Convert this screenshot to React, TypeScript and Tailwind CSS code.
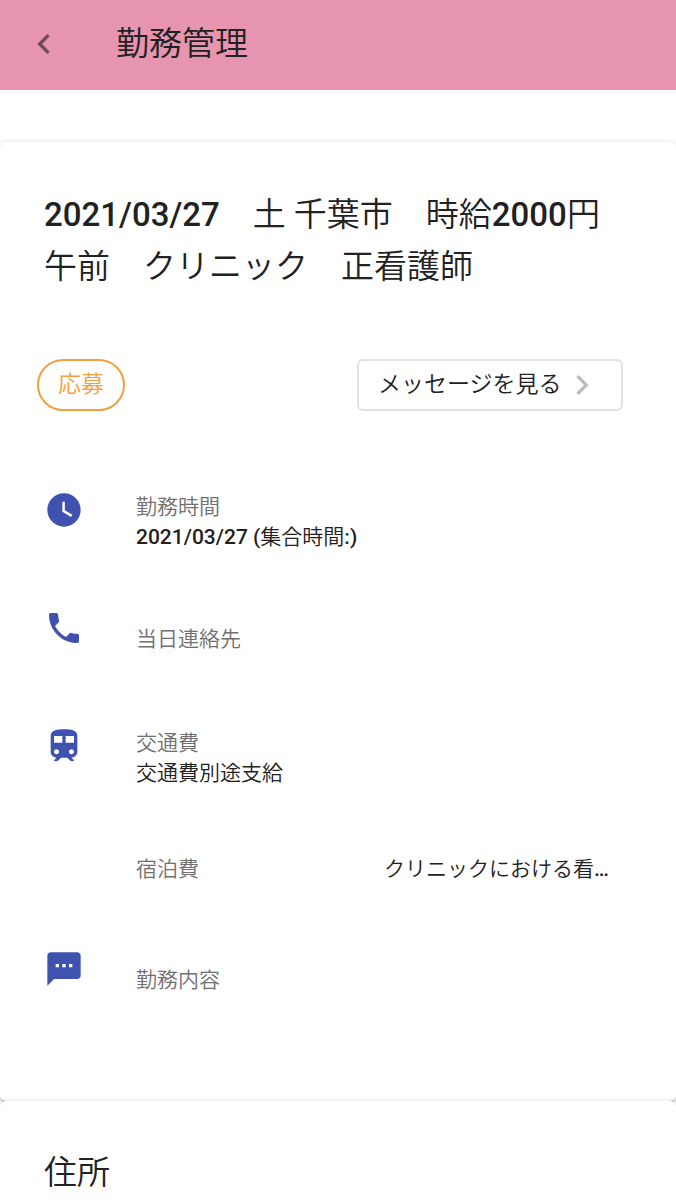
import type { ReactNode } from 'react'
import {
  MdNavigateBefore,
  MdNavigateNext,
  MdWatchLater,
  MdPhone,
  MdTrain,
  MdSms,
} from 'react-icons/md'

interface DetailRowProps {
  icon?: ReactNode
  label: string
  children?: ReactNode
  className?: string
}

// Rows without a value sit a little lower than their icon
function DetailRow({ icon, label, children, className = '' }: DetailRowProps) {
  return (
    <div className={`flex items-start ${className}`}>
      <div className="w-[92px] shrink-0 text-[#4052b0]">{icon}</div>
      <dl className={`text-[21px] leading-[30px] ${children ? 'pt-0.5' : 'pt-4'}`}>
        <dt className="text-[#707070]">{label}</dt>
        {children && <dd>{children}</dd>}
      </dl>
    </div>
  )
}

const cardClass =
  'rounded-md bg-white px-11 shadow-[0_3px_2px_-2px_rgba(0,0,0,0.2),0_2px_2px_rgba(0,0,0,0.14),0_1px_6px_rgba(0,0,0,0.16)]'

export default function App() {
  return (
    <div className="min-h-screen bg-white font-['Roboto','Noto_Sans_CJK_JP',sans-serif] font-[350] text-[#212121]" lang="ja">
      {/* Header */}
      <header className="flex h-[90px] items-center bg-[#e794b0] px-6 pb-0.5">
        <button type="button" aria-label="戻る" className="text-[#6f4a57]">
          <MdNavigateBefore size={40} />
        </button>
        <h1 className="ml-[52px] text-[33px] leading-[52px]">勤務管理</h1>
      </header>

      <main className="pt-[52px]">
        {/* Shift details */}
        <section className={`${cardClass} pt-[47px] pb-[106px]`}>
          <h2 className="text-[33px] leading-[52px]">
            <span className="font-medium">2021/03/27</span>　土 千葉市　時給<span className="font-medium">2000</span>円
            <br />
            午前　クリニック　正看護師
          </h2>

          <div className="-ml-[7px] mr-[9px] mt-[66px] flex items-center justify-between text-[23px] leading-[30px]">
            <span className="flex h-[52px] items-center rounded-full border-2 border-[#f2a03d] px-[19px] text-[#f2a03d]">応募</span>
            <button type="button" className="flex h-[52px] w-[266px] items-center rounded-md border-2 border-[#e2e2e2] pl-[19px]">
              メッセージを見る
              <MdNavigateNext size={40} className="text-[#bdbdbd]" />
            </button>
          </div>

          <DetailRow className="mt-[79px]" icon={<MdWatchLater size={40} />} label="勤務時間">
            <span className="font-medium">2021/03/27 (</span>集合時間<span className="font-medium">:)</span>
          </DetailRow>
          <DetailRow className="mt-14" icon={<MdPhone size={40} />} label="当日連絡先" />
          <DetailRow className="mt-[72px]" icon={<MdTrain size={40} />} label="交通費">
            交通費別途支給
          </DetailRow>

          <div className="mt-[66px] flex pl-[92px] text-[21px] leading-[30px]">
            <p className="w-[248px] shrink-0 text-[#707070]">宿泊費</p>
            <p>
              クリニックにおける看<span className="font-medium">…</span>
            </p>
          </div>

          <DetailRow className="mt-[65px]" icon={<MdSms size={40} />} label="勤務内容" />
        </section>

        {/* Address */}
        <section className={`${cardClass} pt-[46px] pb-12`}>
          <h2 className="text-[33px] leading-[52px]">住所</h2>
        </section>
      </main>
    </div>
  )
}
